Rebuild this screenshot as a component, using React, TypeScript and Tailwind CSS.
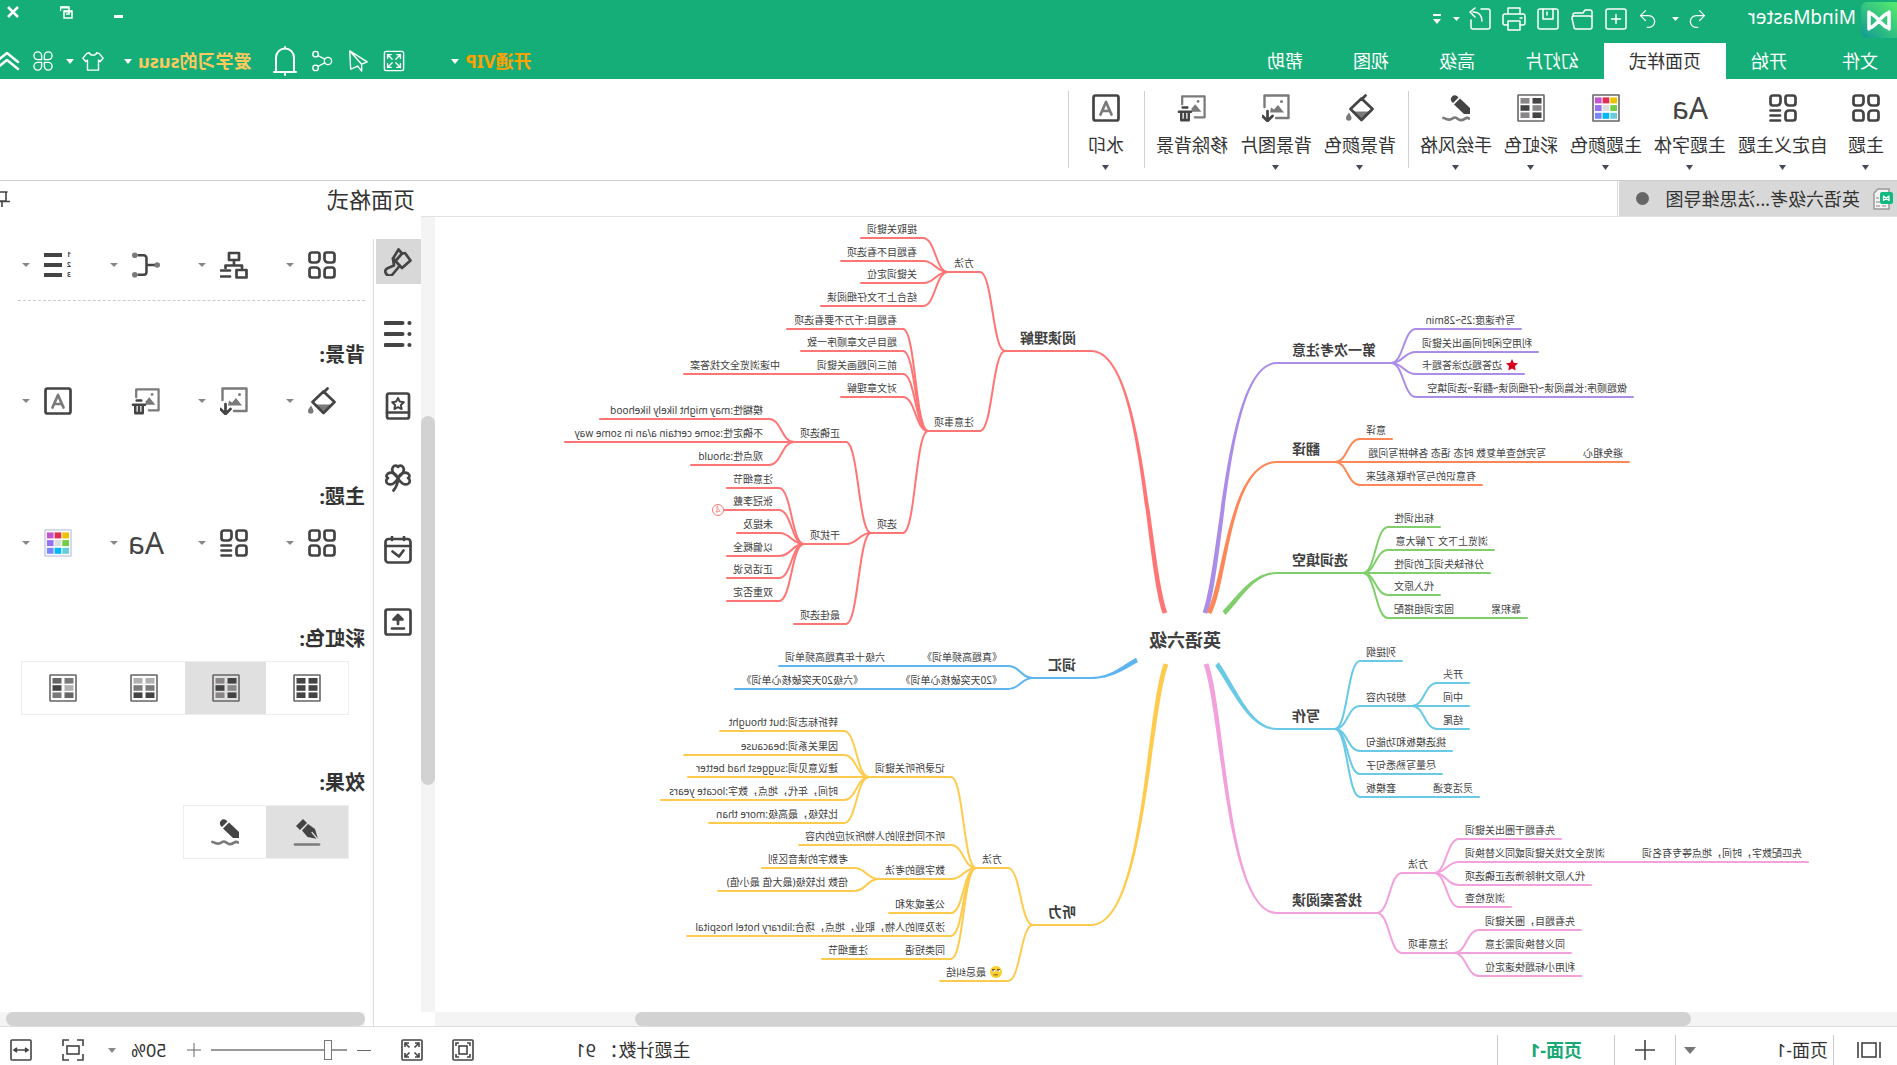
import { useState, type ReactNode } from "react";

interface IconProps {
  className?: string;
  children: ReactNode;
  size?: number;
}

const DARK = "#444444";
const MID = "#7a7a7a";

const Icon = ({ className = "h-7 w-7", size = 28, children }: IconProps) => (
  <svg
    viewBox={`0 0 ${size} ${size}`}
    className={`shrink-0 ${className}`}
    fill="none"
    stroke={DARK}
    strokeWidth="2.7"
    strokeLinecap="round"
    strokeLinejoin="round"
    aria-hidden="true"
  >
    {children}
  </svg>
);

// thin white line icons used in the green header
const LineIcon = ({ className = "h-6 w-6", children }: IconProps) => (
  <svg
    viewBox="0 0 24 24"
    className={`shrink-0 ${className}`}
    fill="none"
    stroke="white"
    strokeWidth="1.5"
    strokeLinecap="round"
    strokeLinejoin="round"
    aria-hidden="true"
  >
    {children}
  </svg>
);

const Caret = ({ className = "h-1 w-2 text-[#888888]" }: { className?: string }) => (
  <svg
    viewBox="0 0 8 4"
    preserveAspectRatio="none"
    className={`shrink-0 ${className}`}
    fill="currentColor"
    aria-hidden="true"
  >
    <path d="M0 0h8L4 4z" />
  </svg>
);

const ThemeIcon = () => (
  <Icon>
    <path d="M4 1.5h5.5a2 2 0 0 1 2 2V8a3.5 3.5 0 0 1-3.5 3.5H4A2.5 2.5 0 0 1 1.500 9V4A2.500 2.500 0 0 1 4 1.500z" />
    <path d="M18.500 1.500H24A2.500 2.500 0 0 1 26.500 4v5a2.500 2.500 0 0 1-2.500 2.500h-4A3.500 3.500 0 0 1 16.500 8V3.500a2 2 0 0 1 2-2z" />
    <path d="M4 26.500h5.500a2 2 0 0 0 2-2V20A3.500 3.500 0 0 0 8 16.500H4A2.500 2.500 0 0 0 1.500 19v5A2.500 2.500 0 0 0 4 26.500z" />
    <path d="M18.500 26.500H24a2.500 2.500 0 0 0 2.500-2.500v-5a2.500 2.500 0 0 0-2.500-2.500h-4a3.500 3.500 0 0 0-3.500 3.500v4.500a2 2 0 0 0 2 2z" />
  </Icon>
);

const CustomThemeIcon = () => (
  <Icon>
    <path d="M4 1.500h5.500a2 2 0 0 1 2 2V8A3.500 3.500 0 0 1 8 11.500H4A2.500 2.500 0 0 1 1.500 9V4A2.500 2.500 0 0 1 4 1.500z" />
    <path d="M18.500 1.500H24A2.500 2.500 0 0 1 26.500 4v5a2.500 2.500 0 0 1-2.500 2.500h-4A3.500 3.500 0 0 1 16.500 8V3.500a2 2 0 0 1 2-2z" />
    <path d="M4 26.500h5.500a2 2 0 0 0 2-2V20A3.500 3.500 0 0 0 8 16.500H4A2.500 2.500 0 0 0 1.500 19v5A2.500 2.500 0 0 0 4 26.500z" />
    <path d="M17 16.500h9.500M17 21.500h9.500M17 26.500h9.500" />
  </Icon>
);

const FontIcon = () => (
  <span className="flex h-7 w-9 items-center justify-center text-[30px] leading-7 text-[#444444]">
    Aa
  </span>
);

const swatches = [
  "#efc200", "#e03050", "#c455cc",
  "#72cc45", "#dddddd", "#9672ee",
  "#68cbdc", "#00b8f5", "#7a88ff",
];

const ThemeColorIcon = ({ frame = "#666666" }: { frame?: string }) => (
  <Icon>
    <rect x="1" y="1" width="26" height="26" fill="white" stroke={frame} strokeWidth="1.6" />
    <g stroke="none">
      {swatches.map((color, i) => (
        <rect
          key={color}
          x={3 + (i % 3) * 7.7}
          y={3.4 + Math.floor(i / 3) * 7.7}
          width="6.7"
          height="6"
          fill={color}
        />
      ))}
    </g>
  </Icon>
);

const RainbowIcon = ({ cells }: { cells: string[] }) => (
  <Icon>
    <rect x="1" y="1" width="26" height="26" rx="0.5" stroke="#666666" strokeWidth="1.6" />
    <g stroke="none">
      {cells.map((color, i) => (
        <rect
          key={i}
          x={3.5 + (i % 2) * 12}
          y={4 + Math.floor(i / 2) * 7.2}
          width="9"
          height="5.6"
          fill={color}
        />
      ))}
    </g>
  </Icon>
);

const rainbowSets = [
  [DARK, DARK, DARK, DARK, DARK, DARK],
  [DARK, "#8a8686", "#8a8686", DARK, DARK, "#8a8686"],
  ["#b0b0b0", "#b0b0b0", MID, MID, DARK, DARK],
  [MID, "#666666", "#b0b0b0", DARK, "#666666", MID],
];

const PencilIcon = () => (
  <Icon>
    <g fill={DARK} stroke="none">
      <path d="M0 20v-6L10 4.500l6 6L6 20z" />
      <path d="M11.500 3.500L13 2a4 4 0 0 1 5.500 5.500L17 9z" />
    </g>
    <path d="M1 24.500c3-3 5 3 9 1.500s4-4 7.500-1.500 5 .5 9-.5" stroke={MID} />
  </Icon>
);

const PenIcon = () => (
  <Icon>
    <g fill={DARK} stroke="none">
      <path d="M3 21l3-10 7-5 6 6.500-5.500 6.500z" />
      <path d="M14 5l4-4 7 7-4 4z" />
    </g>
    <path d="M3 21.500l6-7" stroke="#e0e0e0" strokeWidth="1.2" />
    <path d="M2 26.500h24" stroke={MID} />
  </Icon>
);

const BucketIcon = () => (
  <Icon>
    <path d="M4 17.500h17L12.500 26z" fill={MID} stroke="none" />
    <path d="M8.500 1.500l4 4M12.500 4.500L23.500 15 12.500 26 1.500 15z" />
    <path d="M25 18.500c2 2.500 3 4 3 5.500a2.500 2.500 0 0 1-5.500 0c0-1.500 1-3 2.500-5.500z" fill={MID} stroke="none" />
  </Icon>
);

const ImageDownIcon = () => (
  <Icon>
    <g stroke={MID} strokeWidth="2.4">
      <path d="M14 24H1.500V1.500h24V13" />
      <path d="M6 18.500l6-7.500 4 4.500 3-2 1 5z" fill={MID} stroke="none" />
      <circle cx="8.500" cy="7.500" r="1.500" fill={MID} stroke="none" />
    </g>
    <path d="M22.500 17v9M17.500 22l5 5 5-5" />
  </Icon>
);

const ImageRemoveIcon = () => (
  <Icon className="h-7 w-8" size={30}>
    <g stroke={MID} strokeWidth="2.4">
      <path d="M12 25H1.500V2.500h24V11" />
      <path d="M5 19l6.500-8 4 4.500V19z" fill={MID} stroke="none" />
      <circle cx="8.500" cy="8" r="1.500" fill={MID} stroke="none" />
    </g>
    <path d="M16 19h13M18.500 19v9h8v-9M22.500 21.500v5M20 14.500h5" />
  </Icon>
);

const WatermarkIcon = () => (
  <Icon>
    <rect x="1.500" y="1.500" width="25" height="25" rx="2" />
    <path d="M8.500 20.500L14 8l5.500 12.500M10.500 17h7" stroke={MID} />
  </Icon>
);

const LayoutIcon = () => (
  <Icon>
    <rect x="9" y="2" width="10" height="7" />
    <path d="M14 9v5M6 17v-2.500h16.500V17" />
    <rect x="1.500" y="19" width="10" height="7.500" />
    <path d="M18 19.500h9M18 25.500h9" />
  </Icon>
);

const BranchIcon = () => (
  <Icon className="h-7 w-8" size={30}>
    <path d="M4 15h10M23 4.500h-5.500a3 3 0 0 0-3 3v15a3 3 0 0 0 3 3H23" />
    <g fill={MID} stroke="none">
      <circle cx="3" cy="15" r="3" />
      <circle cx="27" cy="4.500" r="3" />
      <circle cx="27" cy="25.500" r="3" />
    </g>
  </Icon>
);

const NumberingIcon = () => (
  <span className="flex flex-col text-[#444444]">
    {[1, 2, 3].map((n) => (
      <span key={n} className="flex h-[10px] items-center gap-1">
        <b className="w-[6px] text-[7px] leading-[10px]">{n}</b>
        <i className="h-1 w-[18px] bg-[#444444]" />
      </span>
    ))}
  </span>
);

const stripIcons = [
  {
    label: "格式",
    icon: (
      <Icon>
        <path d="M13.500 1.500L10 5.500l-3-.5-5.500 7.500L10 20l9-9.500z" />
        <path d="M10 5.500l7 8M12.500 18l7 8.500c2 1.500 5 1.500 6.500-1s.5-4.500-2-5.500L18 17.500l1-7" />
      </Icon>
    ),
  },
  {
    label: "大纲",
    icon: (
      <Icon>
        <path d="M9.500 3h17M9.500 14h17M9.500 25h17" strokeWidth="4" />
        <path d="M2.500 3h.1M2.500 14h.1M2.500 25h.1" strokeWidth="4" />
      </Icon>
    ),
  },
  {
    label: "图标",
    icon: (
      <Icon>
        <rect x="3" y="1.500" width="22" height="25" rx="2" />
        <path d="M3 20.500h22" />
        <path d="M14 6l1.800 3.600 4 .6-2.900 2.800.7 4L14 15.200 10.400 17l.7-4-2.900-2.800 4-.6z" strokeWidth="2" />
      </Icon>
    ),
  },
  {
    label: "剪贴画",
    icon: (
      <Icon>
        <path d="M14 14C8 9 7.500 5 9 3s4-1.500 5 0c1-1.500 3.500-2 5 0s1 6-5 11z" />
        <path d="M14 14c-2-4-6-7-10-4.500-2.500 2-1.500 4 0 4.500-2 1-2.500 4-.5 5.500C7 22 12 19 14 14z" />
        <path d="M14 14c2-4 6-7 10-4.500 2.500 2 1.500 4 0 4.500 2 1 2.500 4 .5 5.500C21 22 16 19 14 14zM14 14c0 5 1.500 9 4.500 12.500" />
      </Icon>
    ),
  },
  {
    label: "任务",
    icon: (
      <Icon>
        <rect x="1.500" y="3" width="25" height="23.500" rx="3" />
        <path d="M1.500 10h25M8 1v3M20 1v3M8.500 14.500l4.500 6 6.500-5" />
      </Icon>
    ),
  },
  {
    label: "导出",
    icon: (
      <Icon>
        <rect x="1.500" y="1.500" width="25" height="25" rx="2" />
        <path d="M14 16V9M9.500 11.500L14 7l4.500 4.500zM8 20.500h12" fill={DARK} />
      </Icon>
    ),
  },
];

interface RibbonItem {
  label: string;
  icon: ReactNode;
  menu?: boolean;
}

const ribbonGroups: RibbonItem[][] = [
  [
    { label: "主题", icon: <ThemeIcon /> },
    { label: "自定义主题", icon: <CustomThemeIcon /> },
    { label: "主题字体", icon: <FontIcon /> },
    { label: "主题颜色", icon: <ThemeColorIcon /> },
    { label: "彩虹色", icon: <RainbowIcon cells={rainbowSets[1]} /> },
    { label: "手绘风格", icon: <PencilIcon /> },
  ],
  [
    { label: "背景颜色", icon: <BucketIcon /> },
    { label: "背景图片", icon: <ImageDownIcon /> },
    { label: "移除背景", icon: <ImageRemoveIcon />, menu: false },
  ],
  [{ label: "水印", icon: <WatermarkIcon /> }],
];

const tabs = ["文件", "开始", "页面样式", "幻灯片", "高级", "视图", "帮助"];

/* ---------- mind map ---------- */

interface Topic {
  text: string;
  y: number;
  w?: number;
  mark?: "star" | "face" | "folded";
  children?: Topic[];
}

interface Branch extends Topic {
  side: "left" | "right";
  color: string;
  from: [number, number];
}

const GAP = 25;
const TOPIC_PAD = 6;
const BRANCH_PAD = 15;
const LEFT_X = 620;
const RIGHT_X = 806;

const branches: Branch[] = [
  {
    text: "第一次考注意", y: 146, side: "left", color: "#ab8ce8", from: [692, 396],
    children: [
      { text: "写作速度:25~28min", y: 112, w: 105 },
      { text: "利用空闲时间画出关键词", y: 135 },
      { text: "边答题边涂答题卡", y: 157, w: 108, mark: "star" },
      { text: "做题顺序:长篇阅读~仔细阅读~翻译~选词填空", y: 180, w: 217 },
    ],
  },
  {
    text: "翻译", y: 245, side: "left", color: "#fd8756", from: [688, 396],
    children: [
      { text: "意译", y: 222 },
      {
        text: "写完检查单复数 时态 语态 各种拼写问题", y: 245, w: 192,
        children: [{ text: "避免粗心", y: 245 }],
      },
      { text: "有意识的与写作联系起来", y: 268 },
    ],
  },
  {
    text: "选词填空", y: 356, side: "left", color: "#80cf6c", from: [673, 396],
    children: [
      { text: "标出词性", y: 310 },
      { text: "浏览上下文 了解大意", y: 333, w: 106 },
      { text: "分析缺失词汇的词性", y: 356 },
      { text: "代入原文", y: 378 },
      { text: "固定词组搭配", y: 401, children: [{ text: "靠积累", y: 401 }] },
    ],
  },
  {
    text: "写作", y: 512, side: "left", color: "#69c9e6", from: [680, 447],
    children: [
      { text: "列提纲", y: 444 },
      {
        text: "想好内容", y: 489,
        children: [
          { text: "开头", y: 466 },
          { text: "中间", y: 489 },
          { text: "结尾", y: 512 },
        ],
      },
      { text: "挑选模板和功能句", y: 534 },
      { text: "尽量写熟悉句子", y: 557 },
      { text: "套模板", y: 580, children: [{ text: "灵活变通", y: 580 }] },
    ],
  },
  {
    text: "找答案阅读", y: 696, side: "left", color: "#f3a1dc", from: [691, 447],
    children: [
      {
        text: "方法", y: 656,
        children: [
          { text: "先看题干圈出关键词", y: 622 },
          {
            text: "浏览全文找关键词或同义替换词", y: 645,
            children: [{ text: "先匹配数字，时间，地点等专有名词", y: 645 }],
          },
          { text: "代入原文排除筛选正确选项", y: 668 },
          { text: "浏览检查", y: 690 },
        ],
      },
      {
        text: "注意事项", y: 736,
        children: [
          { text: "先看题目，圈关键词", y: 713 },
          { text: "同义替换词需注意", y: 736 },
          { text: "利用小标题快速定位", y: 759 },
        ],
      },
    ],
  },
  {
    text: "阅读理解", y: 134, side: "right", color: "#ff7575", from: [732, 396],
    children: [
      {
        text: "方法", y: 55,
        children: [
          { text: "提取关键词", y: 21 },
          { text: "看题目不看选项", y: 44 },
          { text: "关键词定位", y: 66 },
          { text: "结合上下文仔细阅读", y: 89 },
        ],
      },
      {
        text: "注意事项", y: 214,
        children: [
          { text: "看题目:千万不要看选项", y: 112, w: 116 },
          { text: "题目与文章顺序一致", y: 134 },
          {
            text: "前三问题画关键词", y: 157,
            children: [{ text: "中速浏览全文找答案", y: 157 }],
          },
          { text: "对文章理解", y: 180 },
          {
            text: "选项", y: 316,
            children: [
              {
                text: "正确选项", y: 225,
                children: [
                  { text: "模糊性:may might likely likehood", y: 202, w: 169 },
                  { text: "不确定性:some certain a/an in some way", y: 225, w: 204 },
                  { text: "观点性:should", y: 248, w: 78 },
                ],
              },
              {
                text: "干扰项", y: 327,
                children: [
                  { text: "注意细节", y: 271 },
                  { text: "张冠李戴", y: 293, w: 55, mark: "folded" },
                  { text: "未提及", y: 316 },
                  { text: "以偏概全", y: 339 },
                  { text: "正话反说", y: 361 },
                  { text: "双重否定", y: 384 },
                ],
              },
              { text: "最佳选项", y: 407 },
            ],
          },
        ],
      },
    ],
  },
  {
    text: "词汇", y: 461, side: "right", color: "#5eb4ef", from: [760, 443],
    children: [
      {
        text: "《真题高频单词》", y: 449,
        children: [{ text: "六级十年真题高频单词", y: 449 }],
      },
      {
        text: "《20天突破核心单词》", y: 472, w: 114,
        children: [{ text: "《六级20天突破核心单词》", y: 472, w: 134 }],
      },
    ],
  },
  {
    text: "听力", y: 708, side: "right", color: "#ffcb4f", from: [731, 447],
    children: [
      {
        text: "方法", y: 651,
        children: [
          {
            text: "记录所听关键词", y: 560,
            children: [
              { text: "转折标志词:but thought", y: 514, w: 124 },
              { text: "因果关系词:beacause", y: 538, w: 160 },
              { text: "建议意见词:suggest had better", y: 560, w: 156 },
              { text: "时间，年代，地点，数字:locate years", y: 583, w: 183 },
              { text: "比较级，最高级:more than", y: 606, w: 135 },
            ],
          },
          { text: "听不同性别的人物所对应的内容", y: 628 },
          {
            text: "数字题的考法", y: 662,
            children: [
              { text: "考数字的读音区别", y: 651 },
              { text: "倍数 比较级(最大值 最小值)", y: 674, w: 136 },
            ],
          },
          { text: "公差或求和", y: 696 },
          { text: "涉及到的人物，职业，地点，场合:library hotel hospital", y: 719, w: 264 },
          { text: "同类短语", y: 742, children: [{ text: "注重细节", y: 742 }] },
        ],
      },
      { text: "最忌纠结", y: 764, w: 68, mark: "face" },
    ],
  },
];

interface Placed {
  topic: Topic;
  left: number;
  width: number;
  main: boolean;
  color: string;
}

const links: { d: string; color: string; fill?: boolean }[] = [];
const placed: Placed[] = [];

const placeTopic = (
  topic: Topic,
  x: number,
  dir: number,
  color: string,
  main: boolean,
): void => {
  const width =
    topic.w ??
    (main
      ? topic.text.length * 14 + BRANCH_PAD * 2
      : topic.text.length * 10 + TOPIC_PAD * 2);
  const end = x + dir * width;

  placed.push({ topic, left: Math.min(x, end), width, main, color });
  links.push({ d: `M${x} ${topic.y}H${end}`, color });

  topic.children?.forEach((child) => {
    const childX = end + dir * GAP;
    const mid = end + (dir * GAP) / 2;
    links.push({
      d: `M${end} ${topic.y}C${mid} ${topic.y} ${mid} ${child.y} ${childX} ${child.y}`,
      color,
    });
    placeTopic(child, childX, dir, color, false);
  });
};

// root links get thinner towards the branch
const taperedLink = (from: [number, number], x: number, y: number): string => {
  const [sx, sy] = from;
  const dx = x - sx;
  const dy = y - sy;
  const steep = Math.abs(dy) > 100;
  const c1x = sx + dx * (steep ? 0.25 : 0.3);
  const c1y = sy + dy * (steep ? 0.2 : 0.4);
  const c2x = sx + dx * (steep ? 0.29 : 0.55);
  const side = Math.sign(dx);
  const length = Math.hypot(dx, dy);
  const nx = (dy / length) * 2.4;
  const ny = (-dx / length) * 2.4;
  return [
    `M${sx + nx} ${sy + ny}`,
    `C${c1x + nx} ${c1y + ny} ${c2x + nx / 2} ${y - side} ${x} ${y - side}`,
    `V${y + side}`,
    `C${c2x - nx / 2} ${y + side} ${c1x - nx} ${c1y - ny} ${sx - nx} ${sy - ny}Z`,
  ].join("");
};

branches.forEach((branch) => {
  const x = branch.side === "left" ? LEFT_X : RIGHT_X;
  links.push({
    d: taperedLink(branch.from, x, branch.y),
    color: branch.color,
    fill: true,
  });
  placeTopic(branch, x, branch.side === "left" ? -1 : 1, branch.color, true);
});

const StarMark = () => (
  <svg viewBox="0 0 12 12" className="h-3 w-3" fill="#d9001b" aria-hidden="true">
    <path d="M6 0l1.700 3.800 4.300.5-3.100 2.900.8 4.300L6 9.500l-3.700 2 .8-4.300L0 4.300l4.300-.5z" />
  </svg>
);

const FaceMark = () => (
  <svg viewBox="0 0 12 12" className="h-3 w-3" aria-hidden="true">
    <circle cx="6" cy="6" r="6" fill="#fbd02d" />
    <path d="M2 4.800h3M7 4.800h3" stroke="white" strokeWidth="1.8" />
    <path d="M2 3.500h3M7 3.500h3M4 8.800h4.500" stroke="#8a5a14" strokeWidth="1" />
    <circle cx="4" cy="4.800" r="0.7" fill="#333333" />
    <circle cx="9" cy="4.800" r="0.7" fill="#333333" />
  </svg>
);

const MindMap = () => (
  <div className="relative h-[795px] w-[1462px] text-[#404040]">
    <svg
      viewBox="0 0 1462 795"
      className="absolute inset-0 h-full w-full"
      fill="none"
      strokeWidth="2"
      strokeLinecap="round"
      aria-hidden="true"
    >
      {links.map((link) => (
        <path
          key={link.d}
          d={link.d}
          fill={link.fill ? link.color : "none"}
          stroke={link.fill ? "none" : link.color}
        />
      ))}
    </svg>

    <h1
      className="absolute text-[18px] leading-6 font-bold whitespace-nowrap"
      style={{ left: 676, top: 411 }}
    >
      英语六级
    </h1>

    {placed.map(({ topic, left, width, main, color }) => (
      <div
        key={`${left}-${topic.y}`}
        className={
          main
            ? "absolute px-[15px] text-[14px] leading-5 font-bold whitespace-nowrap"
            : "absolute flex items-center gap-1 px-[6px] text-[10px] leading-[14px] whitespace-pre"
        }
        style={{ left, width, top: topic.y - (main ? 23 : 16) }}
      >
        {topic.mark === "star" && <StarMark />}
        {topic.mark === "face" && <FaceMark />}
        {topic.text}
        {topic.mark === "folded" && (
          <button
            type="button"
            className="absolute top-[10px] left-full flex h-3 w-3 items-center justify-center rounded-full border bg-white text-[8px] leading-none"
            style={{ borderColor: color, color }}
          >
            4
          </button>
        )}
      </div>
    ))}
  </div>
);

/* ---------- header ---------- */

const QuickButton = ({ label, children }: { label: string; children: ReactNode }) => (
  <button type="button" aria-label={label} className="flex items-center">
    {children}
  </button>
);

const TitleBar = () => (
  <div className="flex h-[43px] items-start">
    <svg viewBox="0 0 36 36" className="mt-[2px] h-9 w-9 shrink-0" aria-label="MindMaster">
      <defs>
        <linearGradient id="logo" x1="0" y1="0" x2="1" y2="1">
          <stop offset="0" stopColor="#5bf06a" />
          <stop offset="1" stopColor="#0f9a94" />
        </linearGradient>
      </defs>
      <rect x="-4" width="40" height="36" rx="6" fill="url(#logo)" />
      <path
        d="M8 10v17M28 10v17M8 11c7 0 13 15 20 15M8 26c7 0 13-15 20-15"
        stroke="white"
        strokeWidth="3.5"
        fill="none"
        strokeLinecap="round"
      />
    </svg>
    <span className="ml-[5px] pt-1 text-[19px] leading-[26px] text-white">MindMaster</span>

    <div className="ml-[41px] flex h-[37px] items-center">
      <QuickButton label="撤销">
        <LineIcon className="h-5 w-5">
          <path d="M9 2L3 8l6 6M4 8h9a7 7 0 0 1 0 14h-2" />
        </LineIcon>
      </QuickButton>
      <Caret className="ml-2 h-1 w-[7px] text-white" />
      <div className="ml-[14px] flex items-center gap-[10px]">
        <QuickButton label="重做">
          <LineIcon className="h-5 w-5">
            <path d="M15 2l6 6-6 6M20 8h-9a7 7 0 0 0 0 14h2" />
          </LineIcon>
        </QuickButton>
        <QuickButton label="新建">
          <LineIcon>
            <rect x="2" y="2" width="20" height="20" rx="2" />
            <path d="M12 7.500v9M7.500 12h9" />
          </LineIcon>
        </QuickButton>
        <QuickButton label="打开">
          <LineIcon>
            <path d="M2 14V5a2 2 0 0 1 2-2h5l2 3h8a2 2 0 0 1 2 2v1M4.500 9H20a2 2 0 0 1 2 2.500l-2 8.500a2 2 0 0 1-2 2H4a2 2 0 0 1-2-2v-8.500A2.500 2.500 0 0 1 4.500 9z" />
          </LineIcon>
        </QuickButton>
        <QuickButton label="保存">
          <LineIcon>
            <rect x="2" y="2" width="20" height="20" rx="2" />
            <path d="M7 2v10h10V2M13 5v3" />
          </LineIcon>
        </QuickButton>
        <QuickButton label="打印">
          <LineIcon>
            <path d="M6 7V1h12v6M6 18H3a2 2 0 0 1-2-2V9a2 2 0 0 1 2-2h18a2 2 0 0 1 2 2v7a2 2 0 0 1-2 2h-3M4 11h2" />
            <rect x="6" y="14" width="12" height="9" />
          </LineIcon>
        </QuickButton>
        <QuickButton label="导出">
          <LineIcon>
            <path d="M11 2H4a2 2 0 0 0-2 2v16a2 2 0 0 0 2 2h15a2 2 0 0 0 2-2v-7M10 14c0-5 3-9 9-9M17 1l5 4-5 5" />
          </LineIcon>
        </QuickButton>
      </div>
      <Caret className="ml-2 h-1 w-[7px] text-white" />
      <QuickButton label="自定义快速访问工具栏">
        <span className="ml-3 flex w-2 flex-col items-center gap-[3px]">
          <i className="h-[2px] w-2 bg-white" />
          <Caret className="h-[5px] w-2 text-white" />
        </span>
      </QuickButton>
    </div>

    <div className="ml-auto flex h-6 items-center gap-[41px] pr-[7px]">
      <button type="button" aria-label="最小化" className="pt-2">
        <span className="block h-[3px] w-[9px] bg-white" />
      </button>
      <button type="button" aria-label="还原">
        <svg viewBox="0 0 13 13" className="h-[13px] w-[13px]" fill="none" stroke="white" strokeWidth="1.500" aria-hidden="true">
          <path d="M9.500 5V1H1v7h3" transform="translate(3 0)" />
          <rect x="1" y="5" width="8" height="7" />
          <path d="M4 1.500h8M1 5.500h8" strokeWidth="2" />
        </svg>
      </button>
      <button type="button" aria-label="关闭">
        <svg viewBox="0 0 12 12" className="h-3 w-3" stroke="white" strokeWidth="2.500" aria-hidden="true">
          <path d="M1 1l10 10M11 1L1 11" />
        </svg>
      </button>
    </div>
  </div>
);

interface TabBarProps {
  active: string;
  onSelect: (tab: string) => void;
}

const TabBar = ({ active, onSelect }: TabBarProps) => (
  <div className="flex h-9 items-stretch text-[18px] leading-6">
    <nav className="flex">
      {tabs.map((tab) => (
        <button
          key={tab}
          type="button"
          onClick={() => onSelect(tab)}
          className={`px-[25px] whitespace-nowrap first:pr-[30px] first:pl-[19px] ${
            tab === active ? "bg-white text-[#333333]" : "text-white"
          }`}
        >
          {tab}
        </button>
      ))}
    </nav>

    <div className="ml-auto flex items-center">
      <button type="button" className="flex items-center gap-1.5 font-bold text-[#ffa200]">
        开通VIP
        <Caret className="h-[5px] w-2 text-white" />
      </button>
      <div className="ml-[46px] flex items-center gap-[14px]">
        <LineIcon className="h-[22px] w-[22px]">
          <rect x="1.500" y="1.500" width="21" height="21" rx="2" />
          <path d="M5 9V5h4M5 5l5 5M15 5h4v4M19 5l-5 5M5 15v4h4M5 19l5-5M19 15v4h-4M19 19l-5-5" />
        </LineIcon>
        <LineIcon className="h-[22px] w-[22px]">
          <path d="M21 1L2 13l6 2.500V23l4.500-5.500L20 21zM21 1L8 15.500" />
        </LineIcon>
        <LineIcon className="h-[22px] w-[22px]">
          <circle cx="5.500" cy="12" r="4" />
          <circle cx="19" cy="4.500" r="3" />
          <circle cx="19" cy="19.500" r="3" />
          <path d="M9 10l7.500-4M9 14l7.500 4" />
        </LineIcon>
        <svg viewBox="0 0 24 30" className="h-[30px] w-6 shrink-0" fill="none" stroke="white" strokeWidth="2" strokeLinecap="round" aria-hidden="true">
          <path d="M3 25V11.500a9 9 0 0 1 18 0V25M1 26h22M12 1v1M12 27v2" />
        </svg>
      </div>
      <button type="button" className="ml-[22px] flex items-center gap-1.5 font-bold text-[#ffc95c]">
        爱学习的susu
        <Caret className="h-[5px] w-2 text-white" />
      </button>
      <div className="ml-5 flex items-center">
        <LineIcon className="h-[22px] w-[22px]">
          <path d="M8 3L5 4 1 9l3 3.500L6 11v11h12V11l2 1.500L23 9l-4-5-3-1c-1 3.500-7 3.500-8 0z" />
        </LineIcon>
        <Caret className="ml-2 h-[5px] w-2 text-white" />
      </div>
      <div className="ml-3">
        <LineIcon className="h-[22px] w-[22px]">
          <path d="M10.500 10.500V6.200a4.200 4.200 0 1 0-4.200 4.300zM13.500 10.500V6.200a4.200 4.200 0 1 1 4.200 4.300zM10.500 13.500v4.300a4.200 4.200 0 1 1-4.200-4.300zM13.500 13.500v4.300a4.200 4.200 0 1 0 4.200-4.300z" />
        </LineIcon>
      </div>
      <button type="button" aria-label="收起功能区" className="ml-3 w-5 overflow-hidden">
        <svg viewBox="0 0 26 20" className="h-5 w-[26px]" fill="none" stroke="white" strokeWidth="2.500" strokeLinecap="round" strokeLinejoin="round" aria-hidden="true">
          <path d="M2 11L13 2l11 9M2 18l11-9 11 9" />
        </svg>
      </button>
    </div>
  </div>
);

const Ribbon = () => (
  <div className="flex h-[102px] items-start border-b border-[#cccccc] bg-white pl-[5px]">
    {ribbonGroups.map((group, i) => (
      <div
        key={i}
        className="mt-3 flex h-[77px] items-start gap-3 border-r border-[#d0d0d0] pr-[11px] not-first:pl-3"
      >
        {group.map(({ label, icon, menu = true }) => (
          <button
            key={label}
            type="button"
            className="flex min-w-[52px] flex-col items-center pt-[3px] text-[18px] leading-6 whitespace-nowrap text-[#333333]"
          >
            {icon}
            <span className="mt-[11px]">{label}</span>
            {menu && <Caret className="mt-2 h-[5px] w-[7px] text-[#444a5a]" />}
          </button>
        ))}
      </div>
    ))}
  </div>
);

/* ---------- side panel ---------- */

const PanelRow = ({ items }: { items: { label: string; icon: ReactNode; menu?: boolean }[] }) => (
  <div className="flex h-12 items-center">
    {items.map(({ label, icon, menu = true }) => (
      <button
        key={label}
        type="button"
        aria-label={label}
        className="flex w-[88px] items-center gap-2.5 pl-[25px]"
      >
        <span className="flex w-9 justify-center">{icon}</span>
        {menu && <Caret />}
      </button>
    ))}
  </div>
);

const FormatPanel = () => {
  const [rainbow, setRainbow] = useState(1);
  const [handDrawn, setHandDrawn] = useState(false);

  return (
    <aside className="flex w-[421px] shrink-0 flex-col bg-white text-[#333333]">
      <div className="flex h-9 items-center justify-between overflow-hidden pl-[6px]">
        <h2 className="text-[22px] leading-8">页面格式</h2>
        <button type="button" aria-label="固定" className="w-[10px] overflow-hidden">
          <Icon className="h-4 w-4" size={16}>
            <path d="M3 1h10M4 1v9h8V1M0 10.500h16M8 11v5" strokeWidth="1.600" />
          </Icon>
        </button>
      </div>

      <div className="flex min-h-0 flex-1 pt-[22px]">
        <div className="flex w-12 shrink-0 flex-col items-start gap-[27px] border-r border-[#dddddd]">
          {stripIcons.map(({ label, icon }, i) => (
            <button
              key={label}
              type="button"
              aria-label={label}
              className={`flex h-[45px] w-[45px] items-center justify-center ${
                i === 0 ? "bg-[#d8d8d8]" : ""
              }`}
            >
              {icon}
            </button>
          ))}
        </div>

        <div className="flex min-w-0 flex-1 flex-col pt-[2px] pl-2">
          <PanelRow
            items={[
              { label: "布局", icon: <ThemeIcon /> },
              { label: "结构", icon: <LayoutIcon /> },
              { label: "连线样式", icon: <BranchIcon /> },
              { label: "编号", icon: <NumberingIcon /> },
            ]}
          />
          <div className="mt-[11px] mr-[18px] border-t border-dashed border-[#cccccc]" />

          <h3 className="mt-10 text-[20px] leading-7 font-bold">背景:</h3>
          <div className="mt-2">
            <PanelRow
              items={[
                { label: "背景颜色", icon: <BucketIcon /> },
                { label: "背景图片", icon: <ImageDownIcon /> },
                { label: "移除背景", icon: <ImageRemoveIcon />, menu: false },
                { label: "水印", icon: <WatermarkIcon /> },
              ]}
            />
          </div>

          <h3 className="mt-[58px] text-[20px] leading-7 font-bold">主题:</h3>
          <div className="mt-2">
            <PanelRow
              items={[
                { label: "主题", icon: <ThemeIcon /> },
                { label: "自定义主题", icon: <CustomThemeIcon /> },
                { label: "主题字体", icon: <FontIcon /> },
                { label: "主题颜色", icon: <ThemeColorIcon frame="#ccd0e4" /> },
              ]}
            />
          </div>

          <h3 className="mt-[58px] text-[20px] leading-7 font-bold">彩虹色:</h3>
          <div className="mt-2 ml-4 flex h-[54px] w-[328px] border border-[#eeeeee]">
            {rainbowSets.map((cells, i) => (
              <button
                key={i}
                type="button"
                aria-label={`彩虹色 ${i + 1}`}
                onClick={() => setRainbow(i)}
                className={`flex flex-1 items-center justify-center ${
                  rainbow === i ? "bg-[#e0e0e0]" : ""
                }`}
              >
                <RainbowIcon cells={cells} />
              </button>
            ))}
          </div>

          <h3 className="mt-[54px] text-[20px] leading-7 font-bold">效果:</h3>
          <div className="mt-2 ml-4 flex h-[54px] w-[166px] border border-[#eeeeee]">
            <button
              type="button"
              aria-label="标准"
              onClick={() => setHandDrawn(false)}
              className={`flex flex-1 items-center justify-center ${handDrawn ? "" : "bg-[#e0e0e0]"}`}
            >
              <PenIcon />
            </button>
            <button
              type="button"
              aria-label="手绘风格"
              onClick={() => setHandDrawn(true)}
              className={`flex flex-1 items-center justify-center ${handDrawn ? "bg-[#e0e0e0]" : ""}`}
            >
              <PencilIcon />
            </button>
          </div>

          <div className="mt-auto h-[14px] bg-[#f4f4f4] pr-[6px]">
            <div className="h-full rounded-full bg-[#d2d2d2]" />
          </div>
        </div>
      </div>
    </aside>
  );
};

/* ---------- status bar ---------- */

const StatusIcon = ({ children }: { children: ReactNode }) => (
  <svg
    viewBox="0 0 22 22"
    className="h-[22px] w-[22px] shrink-0"
    fill="none"
    stroke={DARK}
    strokeWidth="1.6"
    aria-hidden="true"
  >
    {children}
  </svg>
);

const StatusBar = () => {
  const [zoom, setZoom] = useState(50);

  return (
    <footer className="flex h-[39px] shrink-0 items-center border-t border-[#dddddd] bg-white text-[18px] leading-6 text-[#333333]">
      <svg viewBox="0 0 24 18" className="mt-2 ml-4 h-[18px] w-6" fill="none" stroke={DARK} strokeWidth="1.6" aria-hidden="true">
        <path d="M1 1v16M23 1v16" />
        <rect x="5" y="2" width="14" height="14" />
      </svg>
      <div className="mt-2 ml-[23px] flex h-[31px] items-center border-x border-[#cccccc] pr-2 pl-[5px]">
        <select
          aria-label="页面"
          className="w-[132px] appearance-none bg-transparent outline-none"
        >
          <option>页面-1</option>
        </select>
        <Caret className="h-[7px] w-3 text-[#777777]" />
      </div>
      <button type="button" aria-label="添加页面" className="mt-2 flex h-[31px] w-[61px] items-center justify-center border-r border-[#cccccc]">
        <StatusIcon>
          <path d="M11 1v20M1 11h20" />
        </StatusIcon>
      </button>
      <button type="button" className="mt-2 flex h-[31px] w-[117px] items-center justify-center border-r border-[#cccccc] font-bold text-[#1aa876]">
        页面-1
      </button>

      <div className="mt-2 ml-auto flex items-center">
        <p className="w-[217px] whitespace-nowrap">主题计数： 91</p>
        <StatusIcon>
          <rect x="1" y="1" width="20" height="20" rx="1" />
          <rect x="7" y="7" width="8" height="8" />
          <path d="M4 7V4h3M15 4h3v3M18 15v3h-3M7 18H4v-3" />
        </StatusIcon>
        <span className="w-[29px]" />
        <StatusIcon>
          <rect x="1" y="1" width="20" height="20" rx="1" />
          <path d="M4 8V4h4M4 4l4.500 4.500M14 4h4v4M18 4l-4.500 4.500M4 14v4h4M4 18l4.500-4.500M18 14v4h-4M18 18l-4.500-4.500" />
        </StatusIcon>
        <button type="button" aria-label="缩小" onClick={() => setZoom(Math.max(10, zoom - 10))} className="ml-[30px] flex h-5 w-[14px] items-center">
          <span className="h-px w-full bg-[#666666]" />
        </button>
        <input
          type="range"
          aria-label="缩放"
          min={31}
          max={200}
          value={zoom}
          onChange={(event) => setZoom(Number(event.target.value))}
          className="mx-2.5 h-5 w-[136px] appearance-none bg-transparent [&::-webkit-slider-runnable-track]:h-[2px] [&::-webkit-slider-runnable-track]:bg-[#999999] [&::-webkit-slider-thumb]:mt-[-9px] [&::-webkit-slider-thumb]:h-5 [&::-webkit-slider-thumb]:w-2 [&::-webkit-slider-thumb]:appearance-none [&::-webkit-slider-thumb]:border [&::-webkit-slider-thumb]:border-[#777777] [&::-webkit-slider-thumb]:bg-white"
        />
        <button type="button" aria-label="放大" onClick={() => setZoom(Math.min(200, zoom + 10))}>
          <svg viewBox="0 0 14 14" className="h-[14px] w-[14px]" stroke="#666666" aria-hidden="true">
            <path d="M7 0v14M0 7h14" />
          </svg>
        </button>
        <button type="button" className="ml-5 flex items-center gap-[15px]">
          {zoom}%
          <Caret className="h-[5px] w-2 text-[#888888]" />
        </button>
        <span className="w-6" />
        <StatusIcon>
          <path d="M1 7V1h6M15 1h6v6M21 15v6h-6M7 21H1v-6" />
          <rect x="5" y="7" width="12" height="8" />
        </StatusIcon>
        <span className="w-[30px]" />
        <StatusIcon>
          <rect x="1" y="1" width="20" height="20" rx="1" />
          <path d="M4 11h14M7 9l-3 2 3 2M15 9l3 2-3 2" />
        </StatusIcon>
        <span className="w-[10px]" />
      </div>
    </footer>
  );
};

const App = () => {
  const [tab, setTab] = useState("页面样式");

  return (
    <div className="flex h-screen -scale-x-100 flex-col overflow-hidden bg-white font-['Noto_Sans','Noto_Sans_CJK_SC',sans-serif]">
      <header className="shrink-0">
        <div className="bg-[#16ae78]">
          <TitleBar />
          <TabBar active={tab} onSelect={setTab} />
        </div>
        <Ribbon />
      </header>

      <div className="flex min-h-0 flex-1">
        <main className="flex min-w-0 flex-1 flex-col">
          <div className="flex h-9 shrink-0 border-b border-[#e2e2e2]">
            <div className="flex w-[278px] items-center bg-[#d8d8d8] pl-1">
              <svg viewBox="0 0 20 22" className="h-[22px] w-5 shrink-0" fill="none" aria-hidden="true">
                <path d="M4 1h11l4 4v16H4z" fill="#f4f4f4" stroke="#999999" strokeWidth="1.5" />
                <path d="M13 14h4M7 18h4M13 18h4M14 10h3" stroke="#aaaaaa" strokeWidth="1.5" />
                <rect y="4" width="13" height="12" rx="2" fill="#10b981" />
                <path d="M4 7.500v5.500M9.500 7.500v5.500M4 8l5.500 4.500M4 12.500L9.500 8" stroke="white" strokeWidth="1.2" />
              </svg>
              <span className="ml-[13px] text-[18px] leading-6 whitespace-nowrap text-[#333333]">
                英语六级考...法思维导图
              </span>
              <span className="mr-[17px] ml-auto h-[13px] w-[13px] rounded-full bg-[#666666]" />
            </div>
            <span className="ml-px w-px bg-[#dddddd]" />
          </div>

          <div className="flex min-h-0 flex-1">
            <div className="flex min-w-0 flex-1 flex-col">
              <div className="min-h-0 flex-1 overflow-hidden">
                <MindMap />
              </div>
              <div className="h-[14px] shrink-0 bg-[#f4f4f4] pr-[200px] pl-[206px]">
                <div className="h-full rounded-full bg-[#d2d2d2]" />
              </div>
            </div>
            <div className="mb-[14px] w-[14px] shrink-0 bg-[#f4f4f4] pt-[199px] pb-[227px]">
              <div className="h-full rounded-full bg-[#d2d2d2]" />
            </div>
          </div>
        </main>

        <FormatPanel />
      </div>

      <StatusBar />
    </div>
  );
};

export default App;
